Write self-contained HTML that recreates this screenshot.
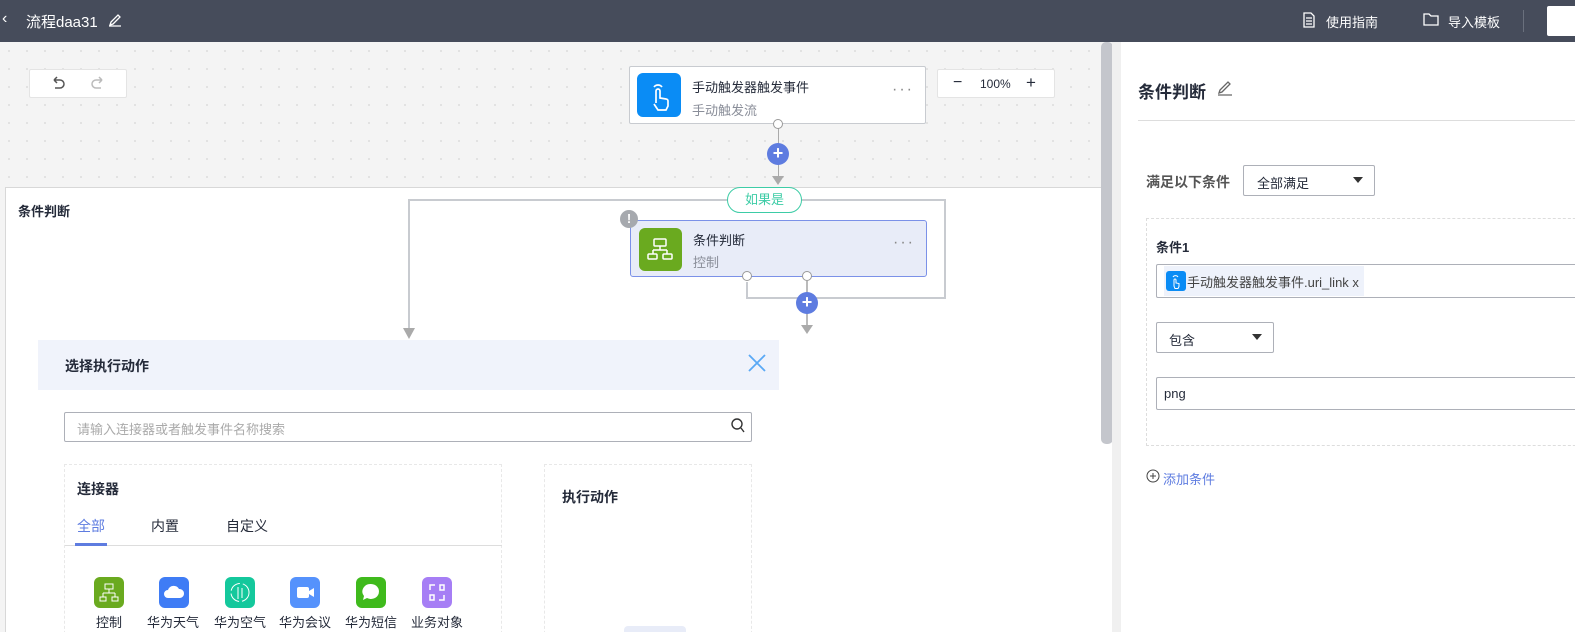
<!DOCTYPE html>
<html><head><meta charset="utf-8"><style>
*{box-sizing:border-box;margin:0;padding:0}
body{width:1575px;height:632px;overflow:hidden;font-family:"Liberation Sans","Noto Sans CJK SC",sans-serif;font-size:13px;color:#252b3a;background:#fff;position:relative}
.a{position:absolute}
.top{left:0;top:0;width:1575px;height:42px;background:#464c5b;color:#fff}
.canvas{left:0;top:42px;width:1120px;height:590px;background:#f4f4f4;background-image:radial-gradient(#e0e0e0 1px,transparent 1.2px);background-size:18px 18px;overflow:hidden}
.card{background:#fff;border:1px solid #c8cbd0;border-radius:2px}
.ico{border-radius:6px}
.sel{border:1px solid #adb0b8;border-radius:2px;background:#fff}
.tri{width:0;height:0;border-left:5px solid transparent;border-right:5px solid transparent;border-top:6px solid #333}
.dot{width:10px;height:10px;border-radius:50%;background:#fff;border:1px solid #999}
.plus{width:22px;height:22px;border-radius:50%;background:#5e7ce0;color:#fff;text-align:center;line-height:21px;font-size:18px;font-weight:bold}
</style></head><body>
<div class="a top">
 <div class="a" style="left:2px;top:10px;font-size:16px">‹</div>
 <div class="a" style="left:26px;top:11px;font-size:15px">流程daa31</div>
 <svg class="a" style="left:107px;top:12px" width="16" height="16"><path d="M3 13 L4 10 L11 3 L13 5 L6 12 Z M2 14 L14 14" stroke="#fff" fill="none" stroke-width="1.3"/></svg>
 <svg class="a" style="left:1302px;top:12px" width="14" height="16"><path d="M2 1h7l3 3v11H2z M4 6h6 M4 9h6 M4 12h6" stroke="#fff" fill="none" stroke-width="1.3"/></svg>
 <div class="a" style="left:1326px;top:12px;font-size:13px">使用指南</div>
 <svg class="a" style="left:1423px;top:12px" width="16" height="14"><path d="M1 2h5l2 2h7v9H1z" stroke="#fff" fill="none" stroke-width="1.3"/></svg>
 <div class="a" style="left:1448px;top:12px;font-size:13px">导入模板</div>
 <div class="a" style="left:1523px;top:10px;width:1px;height:22px;background:#6a707d"></div>
 <div class="a" style="left:1547px;top:6px;width:30px;height:30px;background:#fff;border-radius:2px"></div>
</div>
<div class="a canvas">
 <div class="a card" style="left:29px;top:27px;width:98px;height:29px;border-color:#e4e4e4">
  <svg class="a" style="left:20px;top:6px" width="60" height="16"><path d="M4 4h6a4 4 0 0 1 0 8H5 M4 4l3-3 M4 4l3 3" stroke="#555" stroke-width="1.5" fill="none"/><path d="M52 4h-6a4 4 0 0 0 0 8h5 M52 4l-3-3 M52 4l-3 3" stroke="#bbb" stroke-width="1.5" fill="none"/></svg>
 </div>
 <div class="a card" style="left:937px;top:27px;width:118px;height:29px;border-color:#e4e4e4;font-size:12px">
  <div class="a" style="left:15px;top:4px;font-size:16px">−</div><div class="a" style="left:42px;top:7px">100%</div><div class="a" style="left:88px;top:3px;font-size:17px">+</div>
 </div>
 <div class="a card" style="left:629px;top:24px;width:297px;height:58px">
  <div class="a ico" style="left:7px;top:6px;width:44px;height:44px;background:#0a8cf5">
   <svg width="44" height="44"><path d="M19 30v-12a2 2 0 0 1 4 0v7l6 1a2 2 0 0 1 2 2v5l-2 4h-8l-4-6 M17 14a5 5 0 0 1 8 0" stroke="#fff" stroke-width="1.7" fill="none"/></svg>
  </div>
  <div class="a" style="left:62px;top:10px;font-size:13px">手动触发器触发事件</div>
  <div class="a" style="left:62px;top:33px;font-size:13px;color:#8a8e99">手动触发流</div>
  <div class="a" style="left:262px;top:14px;color:#888;font-size:16px;letter-spacing:2px">···</div>
 </div>
 <div class="a" style="left:778px;top:82px;width:1px;height:55px;background:#aaa"></div>
 <div class="a dot" style="left:773px;top:77px"></div>
 <div class="a plus" style="left:767px;top:101px">+</div>
 <div class="a tri" style="left:772px;top:134px;border-top:9px solid #aaa;border-left-width:6px;border-right-width:6px"></div>
 <div class="a" style="left:5px;top:145px;width:1115px;height:460px;background:#fff;border:1px solid #d8d8d8"></div>
 <div class="a" style="left:18px;top:159px;font-size:13px;font-weight:bold">条件判断</div>
 <div class="a" style="left:408px;top:157px;width:538px;height:100px;border:2px solid #c8cbd0;border-bottom:none"></div>
 <div class="a" style="left:746px;top:240px;width:200px;height:17px;border:2px solid #c8cbd0;border-top:none"></div>
 <div class="a" style="left:408px;top:157px;width:2px;height:130px;background:#c8cbd0"></div>
 <div class="a tri" style="left:403px;top:286px;border-top:11px solid #aaa;border-left-width:6px;border-right-width:6px"></div>
 <div class="a" style="left:727px;top:145px;width:75px;height:26px;border:1px solid #3dcca6;border-radius:13px;background:#fff;color:#3dcca6;text-align:center;line-height:24px;font-size:13px">如果是</div>
 <div class="a" style="left:630px;top:178px;width:297px;height:57px;background:#e8ecf8;border:1px solid #7b91e8;border-radius:3px">
  <div class="a ico" style="left:8px;top:7px;width:43px;height:43px;background:#6aaa1f">
   <svg width="43" height="43"><rect x="15" y="11" width="12" height="7" rx="1" stroke="#fff" fill="none" stroke-width="1.5"/><path d="M21 18v4 M14 22h14 M14 22v4 M28 22v4" stroke="#fff" stroke-width="1.5"/><rect x="9" y="26" width="9" height="5" rx="1" stroke="#fff" fill="none" stroke-width="1.5"/><rect x="24" y="26" width="9" height="5" rx="1" stroke="#fff" fill="none" stroke-width="1.5"/></svg>
  </div>
  <div class="a" style="left:62px;top:9px">条件判断</div>
  <div class="a" style="left:62px;top:31px;color:#8a8e99">控制</div>
  <div class="a" style="left:262px;top:13px;color:#888;font-size:16px;letter-spacing:2px">···</div>
 </div>
 <div class="a" style="left:620px;top:168px;width:18px;height:18px;border-radius:50%;background:#a6a9ae;color:#fff;font-weight:bold;text-align:center;line-height:18px;font-size:13px">!</div>
 <div class="a dot" style="left:742px;top:229px"></div>
 <div class="a dot" style="left:802px;top:229px"></div>
 <div class="a" style="left:806px;top:239px;width:2px;height:50px;background:#bbb"></div>
 <div class="a plus" style="left:796px;top:250px">+</div>
 <div class="a tri" style="left:801px;top:283px;border-top:9px solid #aaa;border-left-width:6px;border-right-width:6px"></div>
 <div class="a" style="left:38px;top:298px;width:741px;height:50px;background:#f0f3fb"></div>
 <div class="a" style="left:65px;top:314px;font-size:14px;font-weight:bold">选择执行动作</div>
 <svg class="a" style="left:747px;top:311px" width="20" height="20"><path d="M2 2L18 18M18 2L2 18" stroke="#5aa9f5" stroke-width="1.8"/></svg>
 <div class="a sel" style="left:64px;top:370px;width:688px;height:30px;color:#aaa;padding:6px 12px">请输入连接器或者触发事件名称搜索</div>
 <svg class="a" style="left:731px;top:376px" width="14" height="16"><circle cx="6" cy="6" r="5" stroke="#333" fill="none" stroke-width="1.4"/><path d="M10 10l3 4" stroke="#333" stroke-width="1.4"/></svg>
 <div class="a" style="left:64px;top:422px;width:438px;height:180px;border:1px dashed #e8e8e8"></div>
 <div class="a" style="left:77px;top:437px;font-size:14px;font-weight:bold">连接器</div>
 <div class="a" style="left:77px;top:474px;font-size:14px;color:#5e7ce0">全部</div>
 <div class="a" style="left:151px;top:474px;font-size:14px">内置</div>
 <div class="a" style="left:226px;top:474px;font-size:14px">自定义</div>
 <div class="a" style="left:65px;top:503px;width:437px;height:1px;background:#ddd"></div>
 <div class="a" style="left:75px;top:501px;width:32px;height:3px;background:#5e7ce0"></div>
 <div class="a ico" style="left:94px;top:535px;width:30px;height:31px;background:#6aaa1f"><svg width="30" height="31"><rect x="11" y="7" width="8" height="5" stroke="#fff" fill="none"/><path d="M15 12v4M9 16h12M9 16v4M21 16v4" stroke="#fff"/><rect x="6" y="20" width="6" height="4" stroke="#fff" fill="none"/><rect x="18" y="20" width="6" height="4" stroke="#fff" fill="none"/></svg></div>
 <div class="a ico" style="left:159px;top:535px;width:30px;height:31px;background:#3f7cf5"><svg width="30" height="31"><path d="M9 21a4 4 0 0 1 0-8a6 6 0 0 1 11-1a4.5 4.5 0 0 1 1 9z" fill="#fff"/></svg></div>
 <div class="a ico" style="left:225px;top:535px;width:30px;height:31px;background:#14c89c"><svg width="30" height="31"><circle cx="15" cy="15.5" r="9" stroke="#fff" fill="none" stroke-dasharray="12 3"/><path d="M13 10v12M17 11v10" stroke="#fff"/></svg></div>
 <div class="a ico" style="left:290px;top:535px;width:30px;height:31px;background:#5592fc"><svg width="30" height="31"><rect x="7" y="10" width="12" height="11" rx="2" fill="#fff"/><path d="M19 14l5-3v9l-5-3z" fill="#fff"/></svg></div>
 <div class="a ico" style="left:356px;top:535px;width:30px;height:31px;background:#3fba1c"><svg width="30" height="31"><path d="M15 7a8 7.5 0 1 1-4 14l-4 2l1-4a8 7.5 0 0 1 7-12z" fill="#fff"/></svg></div>
 <div class="a ico" style="left:422px;top:535px;width:30px;height:31px;background:#a67ef5"><svg width="30" height="31"><path d="M13 8H8v5M17 23h5v-5" stroke="#fff" fill="none" stroke-width="1.5"/><rect x="18" y="8" width="4" height="5" stroke="#fff" fill="none" stroke-width="1.5"/><rect x="8" y="18" width="4" height="5" stroke="#fff" fill="none" stroke-width="1.5"/></svg></div>
 <div class="a" style="left:96px;top:570px;font-size:13px">控制</div>
 <div class="a" style="left:147px;top:570px;font-size:13px">华为天气</div>
 <div class="a" style="left:214px;top:570px;font-size:13px">华为空气</div>
 <div class="a" style="left:279px;top:570px;font-size:13px">华为会议</div>
 <div class="a" style="left:345px;top:570px;font-size:13px">华为短信</div>
 <div class="a" style="left:411px;top:570px;font-size:13px">业务对象</div>
 <div class="a" style="left:544px;top:422px;width:208px;height:180px;border:1px dashed #e8e8e8"></div>
 <div class="a" style="left:562px;top:445px;font-size:14px;font-weight:bold">执行动作</div>
 <div class="a" style="left:624px;top:584px;width:62px;height:10px;background:#e8ecf8;border-radius:4px"></div>
 <div class="a" style="left:1101px;top:0;width:12px;height:402px;background:#c4c6cc;border-radius:5px"></div>
</div>
<div class="a" style="left:1112px;top:42px;width:9px;height:590px;background:#f0f0f0"></div>
<div class="a" style="left:1121px;top:42px;width:454px;height:590px;background:#fff">
 <div class="a" style="left:17px;top:36px;font-size:17px;font-weight:bold">条件判断</div>
 <svg class="a" style="left:95px;top:37px" width="18" height="18"><path d="M3 14 L4 11 L12 3 L14 5 L6 13 Z M2 16 L16 16" stroke="#666" fill="none" stroke-width="1.3"/></svg>
 <div class="a" style="left:17px;top:78px;width:440px;height:1px;background:#ddd"></div>
 <div class="a" style="left:25px;top:130px;font-size:14px;font-weight:bold;color:#555">满足以下条件</div>
 <div class="a sel" style="left:122px;top:123px;width:132px;height:31px;padding:7px 13px">全部满足</div>
 <div class="a tri" style="left:232px;top:135px"></div>
 <div class="a" style="left:25px;top:176px;width:460px;height:228px;border:1px dashed #ddd"></div>
 <div class="a" style="left:35px;top:195px;font-size:13px;font-weight:bold">条件1</div>
 <div class="a sel" style="left:35px;top:222px;width:440px;height:34px"></div>
 <div class="a" style="left:43px;top:224px;width:200px;height:30px;background:#eef2fb"></div>
 <div class="a" style="left:45px;top:229px;width:20px;height:20px;background:#0a8cf5;border-radius:3px"><svg width="20" height="20"><path d="M8 15v-6a1 1 0 0 1 2 0v3l3 .5v3l-1 2h-3z M7 6a3 3 0 0 1 5 0" stroke="#fff" fill="none"/></svg></div>
 <div class="a" style="left:66px;top:230px;color:#444">手动触发器触发事件.uri_link x</div>
 <div class="a sel" style="left:35px;top:280px;width:118px;height:31px;padding:7px 12px">包含</div>
 <div class="a tri" style="left:131px;top:292px"></div>
 <div class="a sel" style="left:35px;top:335px;width:440px;height:33px;padding:8px 7px">png</div>
 <svg class="a" style="left:25px;top:427px" width="14" height="14"><circle cx="7" cy="7" r="6" stroke="#444" fill="none"/><path d="M7 4v6M4 7h6" stroke="#444"/></svg>
 <div class="a" style="left:42px;top:427px;color:#5e7ce0">添加条件</div>
</div>
</body></html>
